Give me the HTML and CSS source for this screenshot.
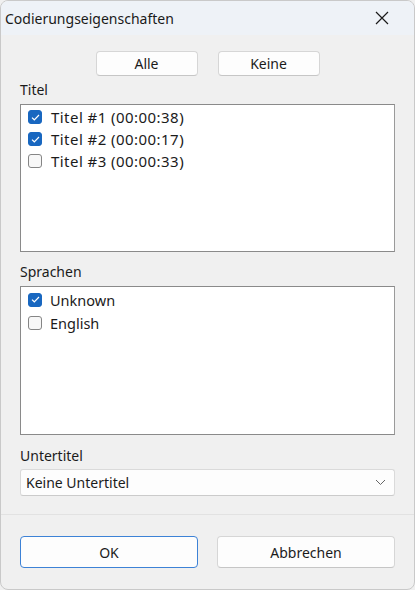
FILE: index.html
```html
<!DOCTYPE html>
<html lang="de">
<head>
<meta charset="utf-8">
<link rel="stylesheet" href="styles.css">
</head>
<body>
<div class="window">
  <div class="titlebar">
    <span class="title">Codierungseigenschaften</span>
    <svg class="close" width="14" height="14" viewBox="0 0 14 14"><path d="M1 1L13 13M13 1L1 13" stroke="#1a1a1a" stroke-width="1.2" fill="none"/></svg>
  </div>
  <div class="content">
    <div class="toprow">
      <button class="btn small">Alle</button>
      <button class="btn small">Keine</button>
    </div>
    <div class="label l1">Titel</div>
    <div class="listbox lb1">
      <div class="item"><span class="cb on"><svg width="9" height="7" viewBox="0 0 9 7"><path d="M1 3.6L3.3 5.8L8 1" stroke="#fff" stroke-width="1.2" fill="none"/></svg></span>Titel #1 (00:00:38)</div>
      <div class="item"><span class="cb on"><svg width="9" height="7" viewBox="0 0 9 7"><path d="M1 3.6L3.3 5.8L8 1" stroke="#fff" stroke-width="1.2" fill="none"/></svg></span>Titel #2 (00:00:17)</div>
      <div class="item"><span class="cb"></span>Titel #3 (00:00:33)</div>
    </div>
    <div class="label l2">Sprachen</div>
    <div class="listbox lb2">
      <div class="item"><span class="cb on"><svg width="9" height="7" viewBox="0 0 9 7"><path d="M1 3.6L3.3 5.8L8 1" stroke="#fff" stroke-width="1.2" fill="none"/></svg></span>Unknown</div>
      <div class="item"><span class="cb"></span>English</div>
    </div>
    <div class="label l3">Untertitel</div>
    <div class="select">
      <span>Keine Untertitel</span>
      <svg width="11" height="7" viewBox="0 0 11 7"><path d="M1 1L5.5 5.5L10 1" stroke="#666" stroke-width="1" fill="none"/></svg>
    </div>
  </div>
  <div class="footer">
    <button class="btn big default">OK</button>
    <button class="btn big">Abbrechen</button>
  </div>
</div>
</body>
</html>
```

FILE: styles.css
```css
html, body {
  margin: 0;
  padding: 0;
  background: #f0f0f0;
}
body {
  font-family: "Noto Sans", "Open Sans", sans-serif;
  font-size: 14px;
  color: #1b1b1b;
}
.window {
  width: 415px;
  height: 590px;
  box-sizing: border-box;
  border: 1px solid #c9c9c9;
  border-radius: 8px;
  background: #f0f0f0;
  overflow: hidden;
  display: flex;
  flex-direction: column;
}
.titlebar {
  height: 34px;
  background: #eef2f7;
  display: flex;
  align-items: center;
  justify-content: space-between;
  padding: 0 25px 0 4px;
  flex-shrink: 0;
}
.title {
  font-size: 14px;
  color: #1a1a1a;
}
.content {
  padding: 0 19px;
  display: flex;
  flex-direction: column;
  flex: 1;
  border-bottom: 1px solid #e2e2e2;
}
.toprow {
  display: flex;
  justify-content: center;
  gap: 20px;
  margin-top: 16px;
}
.btn {
  font-family: inherit;
  font-size: 14px;
  color: #1b1b1b;
  background: #fdfdfd;
  border: 1px solid #d6d6d6;
  border-bottom-color: #c6c6c6;
  border-radius: 4px;
  padding: 0;
}
.btn.small {
  width: 102px;
  height: 25px;
}
.label {
  height: 20px;
  line-height: 20px;
}
.l1 { margin-top: 4px; }
.listbox {
  background: #fff;
  border: 1px solid #8a8a8a;
  border-right-color: #9a9a9a;
  padding: 1px 0 0 7px;
  box-sizing: border-box;
}
.lb1 { height: 148px; margin-top: 4px; }
.lb1 .item {
  font-size: 15px;
  letter-spacing: 0.45px;
}
.l2 { margin-top: 10px; }
.lb2 { height: 149px; margin-top: 4px; }
.lb2 .item {
  font-size: 14.5px;
  height: 23px;
}
.item {
  display: flex;
  align-items: center;
  height: 22px;
}
.cb {
  width: 14px;
  height: 14px;
  box-sizing: border-box;
  border: 1px solid #858585;
  border-radius: 3px;
  background: #f7f7f7;
  margin-right: 9px;
  display: flex;
  align-items: center;
  justify-content: center;
  flex-shrink: 0;
}
.lb2 .cb { margin-right: 8px; }
.cb.on {
  background: #1867c0;
  border-color: #1867c0;
}
.l3 { margin-top: 11px; }
.select {
  margin-top: 3px;
  height: 27px;
  box-sizing: border-box;
  background: #fdfdfd;
  border: 1px solid #dadada;
  border-bottom-color: #cbcbcb;
  border-radius: 3px;
  display: flex;
  align-items: center;
  justify-content: space-between;
  padding: 0 8px 0 5px;
}
.footer {
  height: 74px;
  flex-shrink: 0;
  display: flex;
  gap: 19px;
  padding: 21px 19px 0;
  box-sizing: border-box;
}
.btn.big {
  width: 179px;
  height: 32px;
}
.btn.default {
  border: 1px solid #3d82d6;
  border-radius: 4px;
}
```
